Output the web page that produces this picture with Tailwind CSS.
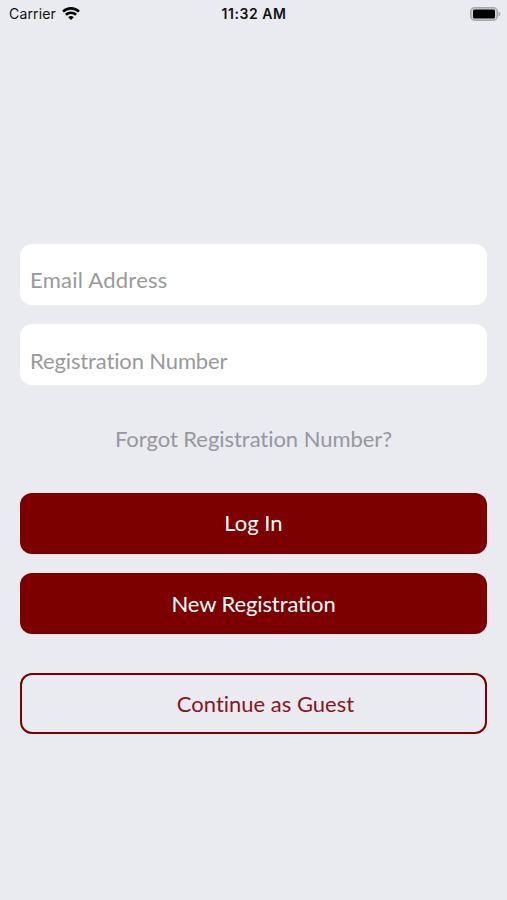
<!DOCTYPE html>
<html lang="en">
<head>
    <meta charset="UTF-8">
    <meta name="viewport" content="width=device-width, initial-scale=1.0">
    <title>Log In</title>
    <script src="https://cdn.jsdelivr.net/npm/@tailwindcss/browser@4"></script>
</head>
<body class="bg-[#eaebf1] font-['Lato',sans-serif] text-[22px] [font-variant-ligatures:none]">
    <div class="h-[900px] flex flex-col overflow-hidden">
        <!-- Status bar -->
        <header class="grid grid-cols-3 items-center h-[27px] pl-[9px] pr-1.5 font-['Inter',sans-serif] text-[14px] text-[#111]">
            <div class="flex items-center gap-1.5">
                <span class="tracking-[0.15px]">Carrier</span>
                <svg class="w-[18px] h-[13px]" viewBox="0 0 18 13" fill="none" stroke="#000" stroke-width="2.6">
                    <path d="M1 4.6a11.5 11.5 0 0 1 16 0"/>
                    <path d="M3.9 7.8a7.3 7.3 0 0 1 10.2 0"/>
                    <path d="M9 13L6.2 10.3a4 4 0 0 1 5.6 0z" fill="#000" stroke="none"/>
                </svg>
            </div>
            <span class="text-center font-semibold whitespace-nowrap tracking-[0.55px] -ml-0.5">11:32 AM</span>
            <svg class="justify-self-end w-[31px] h-[14px]" viewBox="0 0 31 14">
                <rect x=".75" y=".75" width="26.5" height="12.5" rx="4" fill="#d4d5da" stroke="#a5a6ab" stroke-width="1.5"/>
                <rect x="3" y="2.5" width="22" height="9" rx="1.5" fill="#000"/>
                <path d="M28.5 4.5v5c2.5-1 2.5-4 0-5z" fill="#a5a6ab"/>
            </svg>
        </header>

        <!-- Login form -->
        <form class="mt-[217px] px-5 flex flex-col">
            <input type="text" placeholder="Email Address" class="h-[61px] rounded-xl bg-white px-2.5 pt-[9px] tracking-[0.25px] placeholder:text-[#999]">
            <input type="text" placeholder="Registration Number" class="mt-[19px] h-[61px] rounded-xl bg-white px-2.5 pt-[11px] tracking-[-0.13px] placeholder:text-[#999]">
            <a href="#" class="mt-[38px] h-8 leading-8 text-center tracking-[-0.05px] text-[#97979c]">Forgot Registration Number?</a>
            <button type="button" class="mt-[38px] h-[61px] pb-[3px] rounded-xl bg-[#7d0000] text-white">Log In</button>
            <button type="button" class="mt-[19px] h-[61px] pb-px rounded-xl bg-[#7d0000] text-white tracking-[-0.1px]">New Registration</button>
            <button type="button" class="mt-[39px] h-[61px] pl-6 rounded-xl border-2 border-[#7d0000] text-[#8a1520]">Continue as Guest</button>
        </form>
    </div>
</body>
</html>
